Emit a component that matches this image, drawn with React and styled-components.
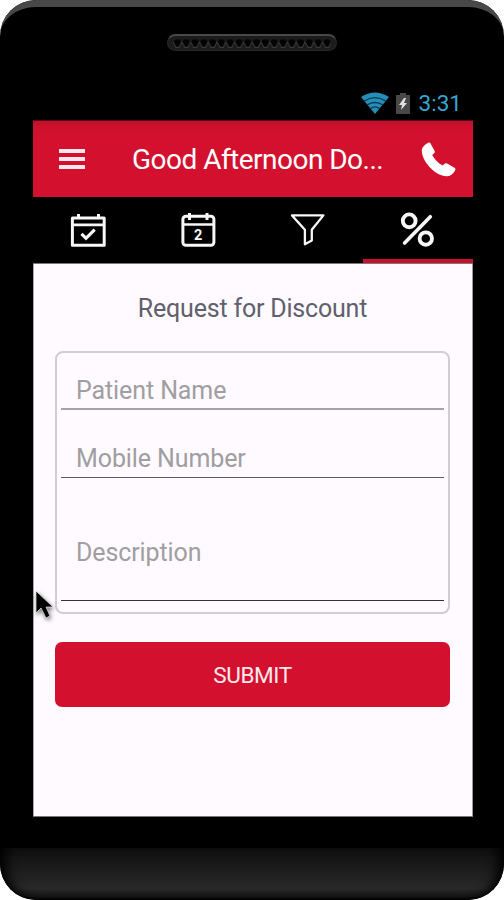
import React, { useState } from 'react';
import styled, { createGlobalStyle } from 'styled-components';

const GlobalStyle = createGlobalStyle`
	* {
		box-sizing: border-box;
	}
	body {
		margin: 0;
		background: #fff;
		font-family: Roboto, 'Liberation Sans', sans-serif;
	}
`;
const Phone = styled.div`
	position: relative;
	display: flex;
	flex-direction: column;
	width: 504px;
	height: 900px;
	overflow: hidden;
	background: #000;
	border-radius: 36px;
`;
const Top = styled.div`
	display: flex;
	flex-direction: column;
	align-items: center;
	height: 120px;
	padding-top: 27px;
	border-top: 7px solid #484848;
	border-radius: 36px 36px 0 0;
`;
const Speaker = styled.div`
	width: 170px;
	height: 17px;
	padding: 3px 5px;
	border: 1px solid #292929;
	border-top: 2px solid #484848;
	border-radius: 9px;
	background: #1b1b1b;
	svg {
		display: block;
	}
`;
const StatusBar = styled.div`
	display: flex;
	align-items: center;
	align-self: flex-end;
	height: 28px;
	margin-top: 38px;
	padding-right: 42px;
	color: #36a5d0;
	font-size: 22.5px;
	svg:first-child {
		margin-right: 7px;
	}
	svg:nth-child(2) {
		margin-right: 9px;
	}
`;
const Screen = styled.main`
	display: flex;
	flex-direction: column;
	width: 440px;
	height: 697px;
	margin-left: 33px;
	background: #fefaff;
	border-bottom: 1px solid #777;
`;
const Header = styled.header`
	display: flex;
	align-items: center;
	height: 77px;
	flex-shrink: 0;
	padding: 0 17px 0 26px;
	border-top: 1px solid #5c0713;
	background: linear-gradient(#c00f29, #cb112c 4px, #d3112e 12px, #d3112e);
	h1 {
		flex: 1;
		margin: 0 0 0 47px;
		color: #fff;
		font-size: 28px;
		font-weight: 400;
		letter-spacing: -0.52px;
		white-space: nowrap;
	}
`;
const IconButton = styled.button`
	all: unset;
	display: flex;
	cursor: pointer;
`;
const Tabs = styled.nav`
	display: flex;
	height: 67px;
	flex-shrink: 0;
	background: #000;
	border-bottom: 1px solid #777;
`;
const Tab = styled.button`
	all: unset;
	display: flex;
	flex: 1;
	justify-content: center;
	box-sizing: border-box;
	padding-top: 15px;
	border-bottom: 4px solid ${(props) => (props.$active ? '#c8102e' : '#000')};
	cursor: pointer;
`;
const Body = styled.section`
	display: flex;
	flex: 1;
	flex-direction: column;
	padding: 0 22px 0 21px;
	border-left: 1px solid #aaa;
	border-right: 1px solid #999;
	h2 {
		margin: 30px 0 27px;
		color: #60606c;
		font-size: 25px;
		font-weight: 400;
		letter-spacing: -0.2px;
		line-height: 30px;
		text-align: center;
	}
`;
const Fields = styled.div`
	height: 263px;
	padding: 0 4px;
	border: 2px solid #d0ced1;
	border-radius: 8px;
`;
const Field = styled.label`
	display: flex;
	align-items: center;
	height: ${(props) => props.$height};
	padding: ${(props) => props.$pad};
	border-bottom: ${(props) => props.$line};
	color: #a09ea0;
	font-size: 25px;
	letter-spacing: -0.1px;
`;
const Submit = styled.button`
	all: unset;
	height: 65px;
	margin-top: 28px;
	background: #d3112e;
	border-radius: 7px;
	color: #ffe9ee;
	font-size: 22.5px;
	letter-spacing: -0.4px;
	line-height: 67px;
	text-align: center;
	cursor: pointer;
`;
const Chin = styled.div`
	height: 52px;
	margin-top: auto;
	background: linear-gradient(#101010, #1a1a1a 35%, #292929 78%, #171717 93%, #000);
	box-shadow: inset 12px 0 12px -6px #000, inset -12px 0 12px -6px #000;
	border-radius: 0 0 36px 36px;
`;
const Cursor = styled.svg`
	position: absolute;
	left: 33px;
	top: 588px;
	filter: drop-shadow(1px 2px 2px #0008);
`;

const SpeakerHoles = () => (
	<svg width='158' height='10' viewBox='0 0 158 10'>
		<defs>
			<pattern id='mesh' width='8.8' height='10' patternUnits='userSpaceOnUse'>
				<circle cx='4.4' cy='4' r='3.8' fill='#030303' />
				<path d='M0 3 2 6.5 3 8.5h3L7 6.5 8.8 3' fill='none' stroke='#3c3c3c' strokeWidth='1' />
			</pattern>
		</defs>
		<rect width='158' height='10' fill='url(#mesh)' />
	</svg>
);
const Wifi = () => (
	<svg width='28' height='22' viewBox='0 0 28 22'>
		<path d='M0 5Q14-4 28 5L14 22Z' fill='#258db7' />
		<path d='M3 9.2Q14 2 25 9.2M6 13Q14 8 22 13M9 16.8Q14 13 19 16.8' fill='none' stroke='#07394d' strokeWidth='1.3' />
	</svg>
);
const Battery = () => (
	<svg width='14' height='21' viewBox='0 0 14 21'>
		<path d='M0 2h4V0h6v2h4v19H0Z' fill='#484848' />
		<path d='m8 5-5 7h3l-1 5 6-7H8l2-5Z' fill='#e0e0e0' />
	</svg>
);
const Menu = () => (
	<svg width='26' height='20' viewBox='0 0 26 20'>
		<path d='M0 2h26M0 10h26M0 18h26' stroke='#ffe7eb' strokeWidth='3.8' />
	</svg>
);
const Handset = () => (
	<svg width='35' height='35' viewBox='0 0 35 35'>
		<path
			d='M7.2.8c1-.7 1.8-.4 2.3.6l4 7.4c.6 1.2.3 2-.7 2.8L11.2 13c2.4 4.4 6 8 10.3 10.4l2.3-1.7c1-.8 1.8-.6 2.8 0l6.8 4c1.2.7 1.3 1.5.6 2.8-1.8 3.6-4.8 5.8-8.5 5.8C14.5 34.3.8 19.5.8 8.8.8 5.4 3.8 2.8 7.2.8Z'
			fill='#fff'
		/>
	</svg>
);
const TabIcon = ({ name }) => (
	<svg width='36' height='36' viewBox='0 0 36 36' fill='none' stroke='#f7f7f7'>
		{name == 'visits' && (
			<>
				<path d='M2.4 6h31.8v27.2H2.4Z' strokeWidth='3' strokeLinejoin='round' />
				<path d='M2 12.9h32' strokeWidth='2.8' />
				<path d='M8.5 2v5M28.5 2v5' strokeWidth='3' />
				<path d='m11.5 21.8 4.5 4.5 8.7-8.7' strokeWidth='3.2' />
			</>
		)}
		{name == 'calendar' && (
			<>
				<rect x='2.9' y='4.3' width='31' height='29' rx='3' strokeWidth='3' />
				<path d='M2.5 12.5h32' strokeWidth='2.6' />
				<path d='M9.5 1v7M27 1v7' strokeWidth='3' />
				<text x='18.2' y='28' textAnchor='middle' fill='#f7f7f7' stroke='none' fontSize='14.5' fontWeight='700'>
					2
				</text>
			</>
		)}
		{name == 'filter' && (
			<path d='M2 3.4h31.4L21.8 17.8v10.6l-6.9 3.8V17.8Z' strokeWidth='2.3' strokeLinejoin='round' />
		)}
		{name == 'discount' && (
			<>
				<circle cx='9.2' cy='8.8' r='6.4' strokeWidth='3.9' />
				<circle cx='25.8' cy='26.6' r='6.2' strokeWidth='3.9' />
				<path d='M30.3 4.7 4.6 31' strokeWidth='3.6' strokeLinecap='round' />
			</>
		)}
	</svg>
);

const tabs = ['visits', 'calendar', 'filter', 'discount'];

const App = () => {
	const [page, setPage] = useState('discount');
	return (
		<>
			<GlobalStyle />
			<Phone>
				<Top>
					<Speaker>
						<SpeakerHoles />
					</Speaker>
					<StatusBar>
						<Wifi />
						<Battery />
						<span>3:31</span>
					</StatusBar>
				</Top>
				<Screen>
					<Header>
						<IconButton aria-label='Menu'>
							<Menu />
						</IconButton>
						<h1>Good Afternoon Do...</h1>
						<IconButton aria-label='Call'>
							<Handset />
						</IconButton>
					</Header>
					<Tabs>
						{tabs.map((name) => (
							<Tab key={name} aria-label={name} $active={page == name} onClick={() => setPage(name)}>
								<TabIcon name={name} />
							</Tab>
						))}
					</Tabs>
					<Body>
						<h2>Request for Discount</h2>
						<Fields>
							<Field $height='57px' $pad='20px 0 0 15px' $line='2px solid #a5a3a6'>
								Patient Name
							</Field>
							<Field $height='68px' $pad='29px 0 0 15px' $line='1px solid #5f5d60'>
								Mobile Number
							</Field>
							<Field $height='123px' $pad='27px 0 0 15px' $line='1px solid #343236'>
								Description
							</Field>
						</Fields>
						<Submit>SUBMIT</Submit>
					</Body>
				</Screen>
				<Chin />
				<Cursor width='22' height='34' viewBox='0 0 22 34'>
					<path d='M3 3v22l5-5 5 10 4-2-4-9h7Z' fill='#000' stroke='#eee' strokeWidth='.7' />
				</Cursor>
			</Phone>
		</>
	);
};

export default App;
